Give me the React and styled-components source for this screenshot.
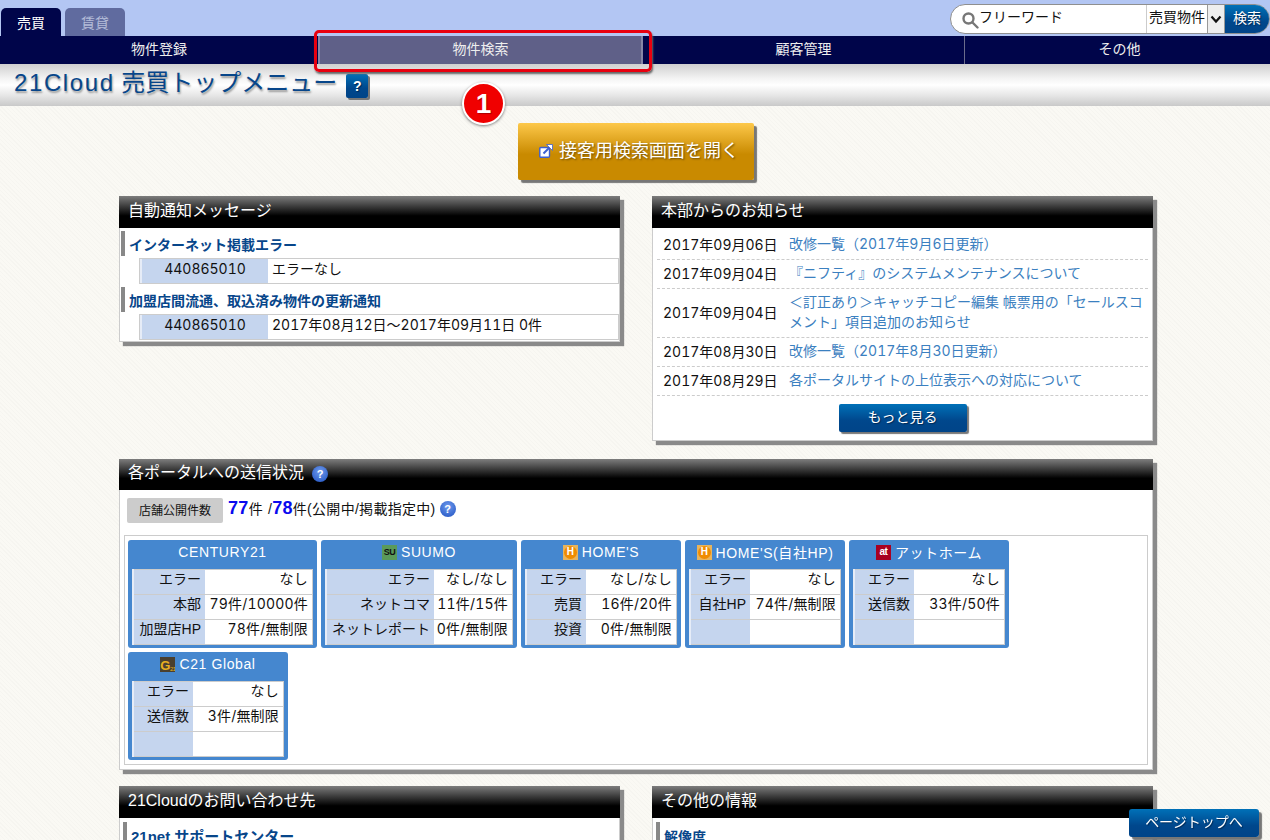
import React from 'react'
import styled, { createGlobalStyle } from 'styled-components'

const GlobalStyle = createGlobalStyle`
  * { box-sizing: border-box; }
  html, body { margin: 0; height: 840px; overflow: hidden; }
  body {
    font-family: "Liberation Sans", "Noto Sans CJK JP", sans-serif;
    font-size: 14px;
    color: #111;
    background-color: #faf9f4;
    background-image: repeating-linear-gradient(45deg, rgba(0,0,0,.014) 0 1px, transparent 1px 3px);
  }
`

const blueButton = `
  background: linear-gradient(#0071b8, #00478c 60%, #004488);
  color: #fff;
  font-weight: 400;
  text-shadow: 1px 1px 1px #002a55;
`

// the digits in the reference run wider than Arial's
const wideDigits = `
  font-family: Inter, "Noto Sans CJK JP", sans-serif;
  font-feature-settings: "tnum";
`

const TopBar = styled.div`
  height: 36px;
  background: #b3c6f3;
  display: flex;
  justify-content: space-between;
`

const Tabs = styled.div`
  display: flex;
  align-items: flex-end;
  gap: 4px;
  padding-left: 1px;
`

const Tab = styled.div`
  width: 60px;
  height: 28px;
  border-radius: 5px 5px 0 0;
  background: ${p => (p.$active ? '#00054a' : '#606b9f')};
  color: ${p => (p.$active ? '#fff' : '#b4bcd8')};
  font-size: 14px;
  display: flex;
  align-items: center;
  justify-content: center;
`

const Search = styled.div`
  margin-top: 4px;
  width: 320px;
  height: 30px;
  display: flex;
  background: #fff;
  border: 1px solid #8f8f8f;
  border-radius: 15px;
  overflow: hidden;
  font-size: 14px;
`

const Keyword = styled.div`
  flex: 1;
  display: flex;
  align-items: flex-start;
  gap: 0;
  padding: 1px 0 0 10px;
  svg { margin-top: 5px; }
`

const SelectValue = styled.div`
  width: 61px;
  border-left: 1px solid #ccc;
  padding-top: 1px;
  padding-left: 2px;
  white-space: nowrap;
`

const SelectArrow = styled.div`
  width: 18px;
  background: #eee;
  border-left: 1px solid #999;
  border-right: 1px solid #999;
  display: flex;
  align-items: center;
  justify-content: center;
`

const SearchButton = styled.div`
  ${blueButton}
  width: 44px;
  display: flex;
  align-items: center;
  justify-content: center;
  padding-bottom: 5px;
`

const Nav = styled.div`
  height: 28px;
  background: #00054a;
  display: grid;
  grid-template-columns: 318px 325px 322px 1fr;
`

const NavItem = styled.div`
  color: #eee;
  font-size: 14px;
  display: flex;
  align-items: center;
  justify-content: center;
  padding: 0 0 5px ${p => (p.$last ? 4 : 0)}px;
  background: ${p => (p.$active ? '#5f6088' : 'transparent')};
  border-right: ${p => (p.$active ? '2px solid #8486a6' : p.$line ? '1px solid #6a6c8c' : 'none')};
  border-left: ${p => (p.$active ? '2px solid #8486a6' : 'none')};
`

const TitleBand = styled.div`
  height: 42px;
  background: linear-gradient(#cfcfcf, #f4f4f4 35%, #ffffff 50%, #e6e6e6 75%, #c9c9c9);
  display: flex;
  align-items: flex-start;
  padding-left: 14px;
`

const Title = styled.h1`
  margin: 3px 0 0;
  font-size: 24px;
  line-height: 32px;
  font-weight: 400;
  color: #07468a;
  text-shadow: 1px 2px 2px #9a9a9a;
`

const TitleLatin = styled.span`
  letter-spacing: 1.6px;
`

const HelpSquare = styled.div`
  ${blueButton}
  width: 22px;
  height: 24px;
  margin: 10px 0 0 9px;
  border-radius: 2px;
  font-size: 14px;
  font-weight: 700;
  display: flex;
  align-items: center;
  justify-content: center;
  box-shadow: 2px 2px 0 #777;
`

const Highlight = styled.div`
  position: absolute;
  left: 314px;
  top: 30px;
  width: 338px;
  height: 42px;
  border: 3px solid #e8000f;
  border-radius: 5px;
  box-shadow: 1px 2px 2px #666;
`

const StepBadge = styled.div`
  position: absolute;
  left: 462px;
  top: 82px;
  width: 43px;
  height: 43px;
  border-radius: 50%;
  background: #f00000;
  border: 2px solid #fff;
  box-shadow: 0 1px 3px #777;
  color: #fff;
  font-size: 28px;
  font-weight: 700;
  text-shadow: 1px 1px 1px #a00;
  display: flex;
  align-items: center;
  justify-content: center;
`

const Center = styled.div`
  display: flex;
  justify-content: center;
  padding: 17px 0 16px 2px;
`

const GuestButton = styled.div`
  width: 236px;
  height: 57px;
  border-radius: 2px;
  padding: 0 0 5px 6px;
  background: linear-gradient(#fdc84a, #c98a00 55%, #c98a00);
  box-shadow: 3px 3px 1px #777;
  color: #fff;
  font-size: 18px;
  text-shadow: 1px 1px 2px #6b4a00;
  display: flex;
  align-items: center;
  justify-content: center;
  gap: 6px;
  svg { margin-top: 3px; }
`

const Main = styled.div`
  width: 1034px;
  margin-left: 119px;
  display: flex;
  flex-direction: column;
  gap: 16px;
`

const Columns = styled.div`
  display: flex;
  justify-content: space-between;
  align-items: flex-start;
  margin-bottom: ${p => p.$after || 0}px;
`

const Panel = styled.section`
  width: ${p => p.$width || '501px'};
  background: #fff;
  border: 1px solid #ccc;
  border-top: none;
  box-shadow: 4px 4px 1px #8a8a8a;
`

const PanelHead = styled.h2`
  margin: 0 -1px;
  height: ${p => p.$height || 32}px;
  padding: 0 9px 7px;
  background: linear-gradient(#7d7d7d, #000 62%);
  color: #fff;
  font-size: 16px;
  font-weight: 400;
  display: flex;
  align-items: center;
  gap: 8px;
`

const NoticeBody = styled.div`
  padding: 3px 0 1px 1px;
`

const ContactBody = styled.div`
  padding: 4px 0 0 3px;
`

const SubHead = styled.h3`
  margin: 0;
  height: 25px;
  padding-left: 4px;
  border-left: 4px solid #888;
  color: #07468a;
  font-size: ${p => p.$size || 14}px;
  font-weight: 700;
  line-height: 28px;
`

const ContactHead = styled(SubHead)`
  line-height: 30px;
  white-space: nowrap;
`

const NoticeTable = styled.div`
  margin: 2px 0 3px 18px;
  height: 26px;
  border: 1px solid #ccc;
  display: flex;
  ${wideDigits}
  &:last-child { margin-bottom: 0; }
`

const NoticeId = styled.div`
  width: 128px;
  background: #c5d5ee;
  border-left: 2px solid #e6ecf7;
  text-align: center;
  line-height: 19px;
`

const NoticeText = styled.div`
  padding-left: 4px;
  line-height: 19px;
`

const NewsRow = styled.div`
  display: flex;
  align-items: center;
  min-height: ${p => (p.$tall ? '49px' : '29px')};
  margin: 0 4px;
  padding-bottom: 2px;
  border-bottom: 1px dashed #ccc;
`

const NewsDate = styled.div`
  ${wideDigits}
  width: 132px;
  padding-left: 6px;
  flex: none;
`

const NewsLink = styled.a`
  ${wideDigits}
  color: #3b80c0;
  line-height: 20px;
`

const News = styled.div`
  padding-top: 3px;
`

const MoreWrap = styled.div`
  display: flex;
  justify-content: center;
  padding: 8px 0 8px;
`

const MoreButton = styled.div`
  ${blueButton}
  width: 128px;
  height: 28px;
  border-radius: 2px;
  font-size: 14px;
  box-shadow: 2px 2px 1px #777;
  display: flex;
  align-items: center;
  justify-content: center;
  padding-bottom: 5px;
`

const HelpDot = styled.span`
  width: 16px;
  height: 16px;
  border-radius: 50%;
  background: radial-gradient(circle at 50% 35%, #6f9bee, #1d50c0);
  color: #fff;
  font-size: 11px;
  font-weight: 700;
  display: inline-flex;
  align-items: center;
  justify-content: center;
  flex: none;
`

const PortalHelp = styled(HelpDot)`
  margin-top: 5px;
`

const CountRow = styled.div`
  display: flex;
  align-items: flex-start;
  height: 45px;
  padding: 8px 0 0 7px;
`

const CountChip = styled.div`
  width: 96px;
  height: 25px;
  background: #ccc;
  border-radius: 2px;
  font-size: 12px;
  padding-bottom: 2px;
  display: flex;
  align-items: center;
  justify-content: center;
  margin-right: 5px;
`

const CountText = styled.div`
  display: flex;
  align-items: baseline;
  line-height: 20px;
  font-size: 14px;
  letter-spacing: .3px;
  white-space: nowrap;
`

const CountNum = styled.b`
  color: #0a0aee;
  font-size: 18px;
`

const Spaced = styled.span`
  margin-right: ${p => p.$gap || 0}px;
`

const CountHelp = styled(HelpDot)`
  margin: 3px 0 0 4px;
`

const PortalBox = styled.div`
  margin: 0 4px 4px;
  height: 230px;
  padding: 4px 3px;
  border: 1px solid #ccc;
  display: flex;
  flex-wrap: wrap;
  align-content: flex-start;
  gap: 4px;
`

const Card = styled.div`
  width: ${p => p.$width}px;
  height: 108px;
  padding: 0 4px;
  background: #4587cf;
  border-radius: 3px;
`

const CardHead = styled.div`
  height: 29px;
  color: #fff;
  font-size: 14px;
  letter-spacing: .6px;
  display: flex;
  align-items: center;
  justify-content: center;
  gap: 4px;
  padding-bottom: 5px;
  white-space: nowrap;
`

const Logo = styled.span`
  width: 15px;
  height: 15px;
  flex: none;
  background: ${p => p.$bg};
  color: ${p => p.$color};
  font-size: ${p => p.$size || 10}px;
  font-weight: 700;
  display: inline-flex;
  align-items: ${p => p.$align || 'center'};
  justify-content: center;
  overflow: hidden;
  letter-spacing: -0.5px;
  line-height: 1;
`

const HomesDisc = styled.span`
  width: 13px;
  height: 13px;
  border-radius: 50%;
  background: #f08c00;
  color: #fff;
  display: inline-flex;
  align-items: center;
  justify-content: center;
`

const GlobalSub = styled.span`
  font-size: 6px;
  font-weight: 400;
`

const StatTable = styled.table`
  width: 100%;
  table-layout: fixed;
  border-collapse: collapse;
  border: 1px solid #ccc;
  background: #fff;
`

const StatRow = styled.tr`
  height: 25px;
  border-bottom: 1px solid #ccc;
  &:last-child { border-bottom: none; }
`

const StatLabel = styled.th`
  width: ${p => p.$width}px;
  background: #c5d5ee;
  border-left: 2px solid #e6ecf7;
  font-weight: 400;
  text-align: right;
  line-height: 16px;
  padding: 0 4px 6px 0;
  white-space: nowrap;
`

const StatValue = styled.td`
  ${wideDigits}
  letter-spacing: .2px;
  text-align: right;
  line-height: 16px;
  padding: 0 4px 6px 0;
  white-space: nowrap;
`

const PageTop = styled.div`
  ${blueButton}
  position: fixed;
  left: 1129px;
  top: 809px;
  width: 130px;
  height: 28px;
  border-radius: 3px;
  font-size: 14px;
  box-shadow: 3px 3px 1px #777;
  display: flex;
  align-items: center;
  justify-content: center;
  padding-bottom: 4px;
`

const news = [
  ['2017年09月06日', '改修一覧（2017年9月6日更新）'],
  ['2017年09月04日', '『ニフティ』のシステムメンテナンスについて'],
  ['2017年09月04日', '＜訂正あり＞キャッチコピー編集 帳票用の「セールスコメント」項目追加のお知らせ', true],
  ['2017年08月30日', '改修一覧（2017年8月30日更新）'],
  ['2017年08月29日', '各ポータルサイトの上位表示への対応について'],
]

const suLogo = <Logo $bg="#5a9a5a" $color="#111" $size={9}>SU</Logo>
const homesLogo = <Logo $bg="#e8b45c" $color="#fff"><HomesDisc>H</HomesDisc></Logo>
const atLogo = <Logo $bg="#a80020" $color="#fff" $size={10}>at</Logo>
const globalLogo = <Logo $bg="#4a4030" $color="#e8b020" $size={13} $align="flex-end">G<GlobalSub>21</GlobalSub></Logo>

const portals = [
  { name: 'CENTURY21', width: 189, label: 72, rows: [['エラー', 'なし'], ['本部', '79件/10000件'], ['加盟店HP', '78件/無制限']] },
  { name: 'SUUMO', logo: suLogo, width: 196, label: 108, rows: [['エラー', 'なし/なし'], ['ネットコマ', '11件/15件'], ['ネットレポート', '0件/無制限']] },
  { name: "HOME'S", logo: homesLogo, width: 160, label: 60, rows: [['エラー', 'なし/なし'], ['売買', '16件/20件'], ['投資', '0件/無制限']] },
  { name: "HOME'S(自社HP)", logo: homesLogo, width: 160, label: 60, rows: [['エラー', 'なし'], ['自社HP', '74件/無制限'], ['', '']] },
  { name: 'アットホーム', logo: atLogo, width: 160, label: 60, rows: [['エラー', 'なし'], ['送信数', '33件/50件'], ['', '']] },
  { name: 'C21 Global', logo: globalLogo, width: 160, label: 60, rows: [['エラー', 'なし'], ['送信数', '3件/無制限'], ['', '']] },
]

const SearchIcon = () => (
  <svg width="18" height="18" viewBox="0 0 18 18" fill="none" stroke="#777" strokeWidth="2.4">
    <circle cx="7.5" cy="7.5" r="5" />
    <path d="M11.5 11.5l5 5" strokeLinecap="round" />
  </svg>
)

const ChevronIcon = () => (
  <svg width="12" height="10" viewBox="0 0 12 10" fill="none" stroke="#111" strokeWidth="2.2">
    <path d="M1.5 2.5L6 7.5l4.5-5" />
  </svg>
)

const ExternalIcon = () => (
  <svg width="14" height="14" viewBox="0 0 14 14">
    <rect x="0.8" y="3.5" width="9.7" height="9.7" rx="1" fill="#fff" stroke="#3c5fd0" strokeWidth="1.4" />
    <path d="M4.5 9.5L10 4" stroke="#3c5fd0" strokeWidth="2" />
    <path d="M7.5 0.5H13.5V6.5z" fill="#fff" stroke="#3c5fd0" strokeWidth="0.8" />
  </svg>
)

const App = () => {
  return (
    <>
      <GlobalStyle />
      <TopBar>
        <Tabs>
          <Tab $active>売買</Tab>
          <Tab>賃貸</Tab>
        </Tabs>
        <Search>
          <Keyword><SearchIcon />フリーワード</Keyword>
          <SelectValue>売買物件</SelectValue>
          <SelectArrow><ChevronIcon /></SelectArrow>
          <SearchButton>検索</SearchButton>
        </Search>
      </TopBar>
      <Nav>
        <NavItem>物件登録</NavItem>
        <NavItem $active>物件検索</NavItem>
        <NavItem $line>顧客管理</NavItem>
        <NavItem $last>その他</NavItem>
      </Nav>
      <TitleBand>
        <Title><TitleLatin>21Cloud</TitleLatin> 売買トップメニュー</Title>
        <HelpSquare>?</HelpSquare>
      </TitleBand>
      <Highlight />
      <StepBadge>1</StepBadge>

      <Center>
        <GuestButton><ExternalIcon />接客用検索画面を開く</GuestButton>
      </Center>

      <Main>
        <Columns $after={2}>
          <Panel>
            <PanelHead>自動通知メッセージ</PanelHead>
            <NoticeBody>
              <SubHead>インターネット掲載エラー</SubHead>
              <NoticeTable>
                <NoticeId>440865010</NoticeId>
                <NoticeText>エラーなし</NoticeText>
              </NoticeTable>
              <SubHead>加盟店間流通、取込済み物件の更新通知</SubHead>
              <NoticeTable>
                <NoticeId>440865010</NoticeId>
                <NoticeText>2017年08月12日～2017年09月11日 0件</NoticeText>
              </NoticeTable>
            </NoticeBody>
          </Panel>
          <Panel>
            <PanelHead>本部からのお知らせ</PanelHead>
            <News>
              {news.map(([date, text, tall], i) => (
                <NewsRow key={i} $tall={tall}>
                  <NewsDate>{date}</NewsDate>
                  <NewsLink>{text}</NewsLink>
                </NewsRow>
              ))}
            </News>
            <MoreWrap><MoreButton>もっと見る</MoreButton></MoreWrap>
          </Panel>
        </Columns>

        <Panel $width="1034px">
          <PanelHead $height={31}>各ポータルへの送信状況 <PortalHelp>?</PortalHelp></PanelHead>
          <CountRow>
            <CountChip>店舗公開件数</CountChip>
            <CountText>
              <CountNum>77</CountNum><Spaced $gap={5}>件</Spaced>/<CountNum>78</CountNum>件(公開中/掲載指定中)
            </CountText>
            <CountHelp>?</CountHelp>
          </CountRow>
          <PortalBox>
            {portals.map(portal => (
              <Card key={portal.name} $width={portal.width}>
                <CardHead>{portal.logo}{portal.name}</CardHead>
                <StatTable>
                  <tbody>
                    {portal.rows.map((row, i) => (
                      <StatRow key={i}>
                        <StatLabel $width={portal.label}>{row[0]}</StatLabel>
                        <StatValue>{row[1]}</StatValue>
                      </StatRow>
                    ))}
                  </tbody>
                </StatTable>
              </Card>
            ))}
          </PortalBox>
        </Panel>

        <Columns>
          <Panel>
            <PanelHead>21Cloudのお問い合わせ先</PanelHead>
            <ContactBody>
              <ContactHead $size={15}>21net サポートセンター</ContactHead>
            </ContactBody>
          </Panel>
          <Panel>
            <PanelHead>その他の情報</PanelHead>
            <ContactBody>
              <ContactHead>解像度</ContactHead>
            </ContactBody>
          </Panel>
        </Columns>
      </Main>
      <PageTop>ページトップへ</PageTop>
    </>
  )
}

export default App
